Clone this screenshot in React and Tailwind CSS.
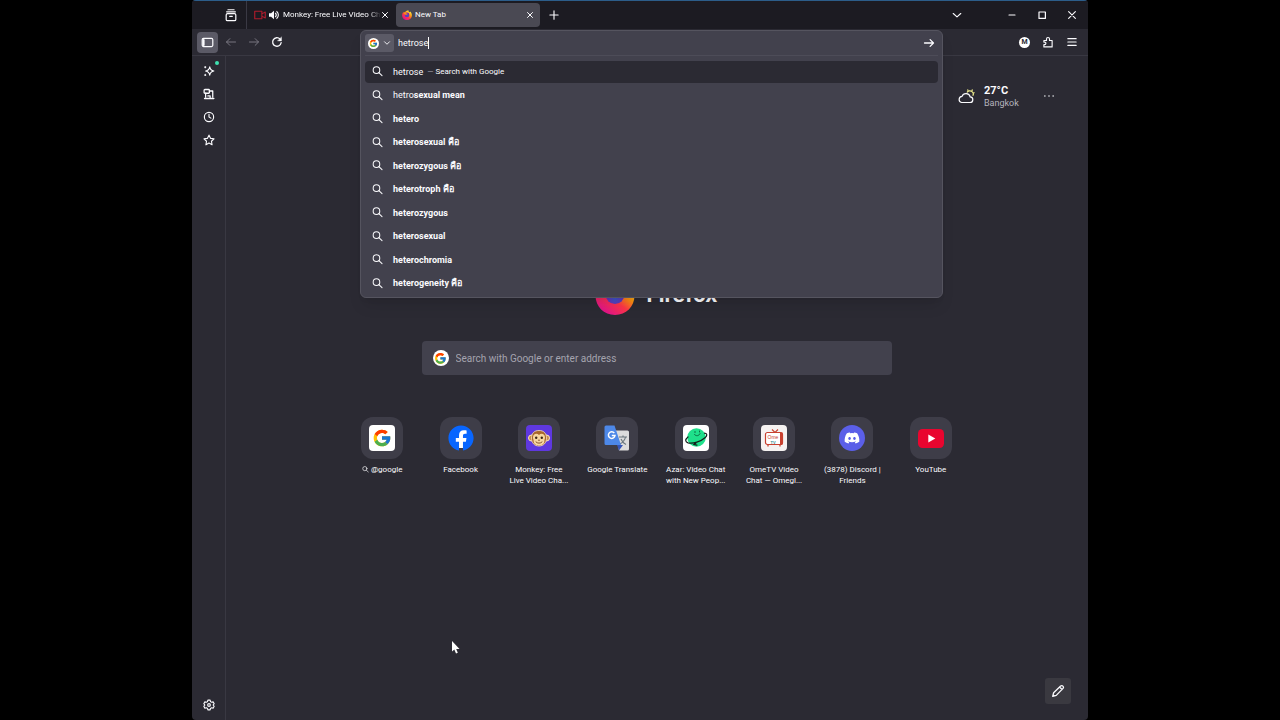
import { useState } from "react";
import { FcGoogle } from "react-icons/fc";
import { FaFacebook, FaDiscord } from "react-icons/fa";

const suggestions = [
  { typed: "hetro", rest: "sexual mean" },
  { typed: "", rest: "hetero" },
  { typed: "", rest: "heterosexual คือ" },
  { typed: "", rest: "heterozygous คือ" },
  { typed: "", rest: "heterotroph คือ" },
  { typed: "", rest: "heterozygous" },
  { typed: "", rest: "heterosexual" },
  { typed: "", rest: "heterochromia" },
  { typed: "", rest: "heterogeneity คือ" },
];

const Icon = ({ className = "size-3", width = 1.3, children }) => (
  <svg
    className={`shrink-0 ${className}`}
    viewBox="0 0 16 16"
    fill="none"
    stroke="currentColor"
    strokeWidth={width}
    strokeLinecap="round"
    strokeLinejoin="round"
    aria-hidden="true"
  >
    {children}
  </svg>
);

const SearchIcon = ({ className }) => (
  <Icon className={className} width={1.5}>
    <circle cx="6.5" cy="6" r="4.8" />
    <path d="M10 9.500l4.600 4.600" />
  </Icon>
);

const CloseIcon = ({ className = "size-2" }) => (
  <Icon className={className} width={2}>
    <path d="M3 3l10 10M13 3L3 13" />
  </Icon>
);

const GoogleBadge = ({ className }) => (
  <span className={`flex shrink-0 items-center justify-center rounded-full bg-white ${className}`}>
    <FcGoogle className="size-4/5" />
  </span>
);

const FirefoxLogo = ({ className, id }) => (
  <svg className={`shrink-0 ${className}`} viewBox="0 0 40 40" aria-hidden="true">
    <defs>
      <linearGradient id={`${id}-body`} x1="0.9" y1="0.1" x2="0.3" y2="0.95">
        <stop offset="0" stopColor="#fff44f" />
        <stop offset="0.4" stopColor="#ff980e" />
        <stop offset="0.65" stopColor="#ff3647" />
        <stop offset="1" stopColor="#e31587" />
      </linearGradient>
      <radialGradient id={`${id}-globe`} cx="0.5" cy="0.7" r="0.6">
        <stop offset="0" stopColor="#3a56c8" />
        <stop offset="1" stopColor="#7d23b5" />
      </radialGradient>
    </defs>
    <path
      d="M26 1c-1 4 1 6 4 8 2-1 3-2 3-3 4 4 6.500 9 6.500 14.500C39.500 31.500 31 40 20 40S.5 31.500.5 20.500C.5 15 3 9.500 6 6.500c0 2 .5 3.500 1.500 4.500C9 9 11.500 7.500 14 7c3-4 7-5.500 12-6z"
      fill={`url(#${id}-body)`}
    />
    <circle cx="20" cy="19.500" r="9.500" fill={`url(#${id}-globe)`} />
    <path d="M7 12c4-2 9-1 12 2 2 0 4 1 4 2-1 2-4 1.500-5 3-2 1-4 0-5 0-2 0-5-3-6-7z" fill="#ff8a16" />
  </svg>
);

const MonkeyIcon = () => (
  <svg className="size-[26px] rounded" viewBox="0 0 26 26" aria-hidden="true">
    <rect width="26" height="26" fill="#5f38e0" />
    <circle cx="5.500" cy="13" r="3" fill="#c98a4b" stroke="#f7e3bf" />
    <circle cx="20.500" cy="13" r="3" fill="#c98a4b" stroke="#f7e3bf" />
    <path d="M13 5.500c5 0 7.500 3 7.500 7.500 0 5-3 8-7.500 8s-7.500-3-7.500-8c0-4.500 2.500-7.500 7.500-7.500z" fill="#a7652c" stroke="#f7e3bf" strokeWidth="0.8" />
    <path d="M13 10c2-2 6-1.500 6 2.500 0 1.500-.6 2-.6 3.500 0 3-2.400 4.400-5.400 4.400S7.600 19 7.600 16C7.600 14.500 7 14 7 12.500c0-4 4-4.500 6-2.500z" fill="#f6d6a0" />
    <circle cx="10.200" cy="12.700" r="1.200" fill="#3a2213" />
    <circle cx="15.800" cy="12.700" r="1.200" fill="#3a2213" />
    <path d="M10 17c1.500 1.600 4.500 1.600 6 0M12.500 15.200h1" fill="none" stroke="#7b4420" strokeWidth="0.9" strokeLinecap="round" />
  </svg>
);

const TranslateIcon = () => (
  <svg className="size-[26px]" viewBox="0 0 26 26" aria-hidden="true">
    <path d="M11 5.500h12.500a1.500 1.500 0 011.500 1.500v17a1.500 1.500 0 01-1.500 1.500H15z" fill="#dcdcdc" />
    <path d="M15 12h8M19 10.500V12M21.500 12c-.5 3-3 5.500-5.500 7M17 14c1 2.500 3 4.500 5 5.500" fill="none" stroke="#69757c" strokeWidth="1.100" />
    <path d="M13 20h6l-4 5.500z" fill="#3555b8" />
    <path d="M2 .5h8.500L17 20H2A1.500 1.500 0 01.5 18.500V2A1.500 1.500 0 012 .5z" fill="#4d88e8" />
    <path d="M10.300 8A3.300 3.300 0 1011 10.500H7.800" fill="none" stroke="#fff" strokeWidth="1.500" />
  </svg>
);

const AzarIcon = () => (
  <svg className="size-[26px] rounded" viewBox="0 0 26 26" aria-hidden="true">
    <rect width="26" height="26" fill="#fff" />
    <circle cx="13.500" cy="12.500" r="9.300" fill="#1fe08b" />
    <path d="M5 12c-3 2.500-3 5 0 5.800 5 1.200 13-1.300 17-5 2.500-2.300 2.500-4.300-.5-4.600M13 18l-2 1.500 3 .7" fill="none" stroke="#12201b" strokeWidth="1.200" strokeLinecap="round" />
    <path d="M11.500 9.500c1.500 2 4.500 1.500 5.500-.8M12 6.500v1M16.500 6v1" fill="none" stroke="#0d6b43" strokeWidth="1" strokeLinecap="round" />
  </svg>
);

const OmeTvIcon = () => (
  <svg className="size-[26px] rounded" viewBox="0 0 26 26" aria-hidden="true">
    <rect width="26" height="26" fill="#f5f2f1" />
    <path d="M11 4.500l3 3L17 4.500" fill="none" stroke="#c8402f" strokeWidth="1.100" />
    <rect x="4.500" y="7.500" width="17" height="12" rx="2" fill="#fff" stroke="#c8402f" strokeWidth="1.200" />
    <path d="M19 7.500h2.500v12H19z" fill="#c8402f" />
    <path d="M7 20v1.500M19 20v1.500" stroke="#c8402f" strokeWidth="1.300" />
    <text x="6.500" y="13.800" fontSize="5" fontFamily="Liberation Sans, sans-serif" fill="#c8402f">Ome</text>
    <text x="9.500" y="18.500" fontSize="4" fontWeight="700" fontFamily="Liberation Sans, sans-serif" fill="#338b8f">TV</text>
  </svg>
);

const YouTubeIcon = () => (
  <svg className="h-[19px] w-[26px]" viewBox="0 0 26 19" aria-hidden="true">
    <rect width="26" height="19" rx="4.500" fill="#e9052f" />
    <path d="M10.300 5.500v8l7-4z" fill="#fff" />
  </svg>
);

const shortcuts = [
  {
    label: "@google",
    search: true,
    icon: (
      <span className="flex size-[26px] items-center justify-center rounded bg-white">
        <FcGoogle className="size-5" />
      </span>
    ),
  },
  {
    label: "Facebook",
    icon: (
      <span className="flex size-[26px] items-center justify-center rounded-full bg-[radial-gradient(#fff_55%,transparent_56%)]">
        <FaFacebook className="size-[26px] text-[#0866ff]" />
      </span>
    ),
  },
  { label: "Monkey: Free Live Video Cha...", icon: <MonkeyIcon /> },
  { label: "Google Translate", icon: <TranslateIcon /> },
  { label: "Azar: Video Chat with New Peop...", icon: <AzarIcon /> },
  { label: "OmeTV Video Chat — Omegl...", icon: <OmeTvIcon /> },
  {
    label: "(3878) Discord | Friends",
    icon: (
      <span className="flex size-[26px] items-center justify-center rounded-full bg-[#5b5fe8]">
        <FaDiscord className="size-4 text-white" />
      </span>
    ),
  },
  { label: "YouTube", icon: <YouTubeIcon /> },
];

function TabStrip() {
  return (
    <header className="flex h-[29px] items-center border-t border-[#2c5d8a] bg-[#1c1b22]">
      <button aria-label="Recent browsing" className="ml-8 mr-2 flex w-[14px] justify-center">
        <Icon className="size-[14px]" width={1.4}>
          <path d="M4.500 2h7" />
          <rect x="2.500" y="6.500" width="11" height="8" rx="1.500" />
          <path d="M3 4.300h10M6.500 9.500h3" />
        </Icon>
      </button>
      <div className="flex h-full w-[150px] items-center border-l border-[#3a3944] pl-[7px]">
        <Icon className="size-3 text-[#b01c2c]" width={1.500}>
          <path d="M1 3h9.500v10H1zM10.500 6.500L15 4v8l-4.500-2.500" />
        </Icon>
        <svg className="ml-[3px] size-[10px] shrink-0" viewBox="0 0 12 12" aria-hidden="true">
          <path d="M0 4h2.500L6 1v10L2.500 8H0z" fill="currentColor" />
          <path d="M7.500 3.500c1.500 1.500 1.500 3.500 0 5M9 1.500c3 2.500 3 6.500 0 9" fill="none" stroke="currentColor" strokeWidth="1.300" />
        </svg>
        <span className="ml-1 whitespace-nowrap text-[8px] [mask-image:linear-gradient(to_right,black_88%,transparent)]">
          Monkey: Free Live Video Ch
        </span>
        <button aria-label="Close Monkey tab" className="ml-auto mr-[9px]">
          <CloseIcon />
        </button>
      </div>
      <div className="flex h-6 w-36 items-center rounded bg-[#4a4953] px-[6px]">
        <FirefoxLogo className="size-[10px]" id="tab" />
        <span className="ml-[3px] flex-1 text-[8px]">New Tab</span>
        <button aria-label="Close New Tab">
          <CloseIcon />
        </button>
      </div>
      <button aria-label="Open a new tab" className="ml-2">
        <Icon width={1.500}>
          <path d="M8 2.500v11M2.500 8h11" />
        </Icon>
      </button>
      <div className="ml-auto flex items-center">
        <button aria-label="List all tabs" className="mr-[43px]">
          <Icon width={1.500}>
            <path d="M3 6l5 4.500L13 6" />
          </Icon>
        </button>
        <div className="mr-[10px] flex gap-[18px]">
          <button aria-label="Minimize">
            <Icon width={1.500}>
              <path d="M4 8h8" />
            </Icon>
          </button>
          <button aria-label="Maximize">
            <Icon width={1.600}>
              <rect x="4" y="4" width="8.500" height="8.500" />
            </Icon>
          </button>
          <button aria-label="Close window">
            <Icon width={1.500}>
              <path d="M3.500 3.500l9 9M12.500 3.500l-9 9" />
            </Icon>
          </button>
        </div>
      </div>
    </header>
  );
}

function UrlBar() {
  const [query, setQuery] = useState("hetrose");

  return (
    <div className="relative h-full flex-1">
      <div className="absolute inset-x-0 top-px z-10 h-[268px] rounded-md border border-[#55545f] bg-[#42414d] shadow-lg">
        <div className="mx-1 flex h-[25px] items-center border-b border-[#4d4c58]">
          <button aria-label="Search engine" className="flex h-[18px] w-[29px] items-center gap-1 rounded-[3px] bg-[#5b5a66] pl-[3px]">
            <GoogleBadge className="size-[11px]" />
            <Icon className="size-2" width={1.800}>
              <path d="M3 5.500l5 5 5-5" />
            </Icon>
          </button>
          <input
            aria-label="Address"
            value={query}
            onChange={(e) => setQuery(e.target.value)}
            className="field-sizing-content ml-1 bg-transparent pt-px text-[9px] caret-transparent outline-none"
          />
          <span className="h-3 w-px bg-white" />
          <button aria-label="Go" className="ml-auto mr-[3px]">
            <Icon width={1.700}>
              <path d="M2 8h12M9.500 3.500L14 8l-4.500 4.500" />
            </Icon>
          </button>
        </div>
        <ul className="mx-1 mt-1 grid h-[235px] auto-rows-fr">
          <li className="py-px">
            <button className="flex h-full w-full items-center rounded bg-[#2b2a33] pl-[7px] text-left text-[9px]">
              <SearchIcon className="size-[11px]" />
              <span className="ml-[10px] pt-px">{query}</span>
              <span className="ml-1 pt-px text-[8px]">
                <span className="text-[#a9a8b3]">—</span> Search with Google
              </span>
            </button>
          </li>
          {suggestions.map((s) => (
            <li key={s.typed + s.rest} className="py-px">
              <button className="flex h-full w-full items-center rounded pl-[7px] text-left text-[9px]">
                <SearchIcon className="size-[11px]" />
                <span className="ml-[10px] pt-px">
                  {s.typed}
                  <b>{s.rest}</b>
                </span>
              </button>
            </li>
          ))}
        </ul>
      </div>
    </div>
  );
}

function Toolbar() {
  return (
    <nav className="flex h-[27px] items-center border-b border-[#393842]">
      <div className="flex w-[168px] items-center gap-[11px] pl-[5px]">
        <button aria-label="Show sidebars" className="flex size-[21px] items-center justify-center rounded bg-[#5b5a66]">
          <Icon className="size-[13px]" width={1.500}>
            <rect x="1.500" y="3" width="13" height="10" rx="1.500" />
            <path d="M3.200 5v6" strokeWidth="2.500" />
          </Icon>
        </button>
        <button aria-label="Back" className="-ml-1 text-[#797883]">
          <Icon className="size-3">
            <path d="M14 8H2M6.500 3.500L2 8l4.500 4.500" />
          </Icon>
        </button>
        <button aria-label="Forward" className="text-[#797883]">
          <Icon className="size-3">
            <path d="M2 8h12M9.500 3.500L14 8l-4.500 4.500" />
          </Icon>
        </button>
        <button aria-label="Reload">
          <Icon className="size-3" width={1.800}>
            <path d="M13.500 9A5.700 5.700 0 1112 4" />
            <path d="M14 1.500v5H9z" fill="currentColor" strokeWidth="0.500" />
          </Icon>
        </button>
      </div>
      <UrlBar />
      <div className="flex w-[145px] items-center justify-end gap-3 pr-[10px]">
        <button aria-label="Account" className="flex size-[11px] items-center justify-center rounded-full bg-white text-[7px] font-bold text-[#2b2a33]">
          M
        </button>
        <button aria-label="Extensions">
          <Icon width={1.500}>
            <path d="M3 6h3V4a2 2 0 014 0v2h3.500v8.500h-11v-3h1a1.700 1.700 0 000-3.400h-1V6z" />
          </Icon>
        </button>
        <button aria-label="Open menu">
          <Icon width={1.600}>
            <path d="M2.500 3.500h11M2.500 8h11M2.500 12.500h11" />
          </Icon>
        </button>
      </div>
    </nav>
  );
}

function Sidebar() {
  return (
    <aside className="flex w-[34px] flex-col items-center gap-[11px] border-r border-[#393842] pb-[9px] pt-[9px]">
      <button aria-label="AI chatbot" className="relative">
        <Icon width={1.500}>
          <path d="M9 2.500c.6 3.500 2 5 5.500 5.500-3.500.6-5 2-5.500 5.500C8.400 10 7 8.600 3.500 8 7 7.500 8.400 6 9 2.500z" />
          <path d="M3 2v1.500M2.200 2.800h1.500M3 12.500V14M2.200 13.300h1.500" />
        </Icon>
        <span className="absolute -right-1 -top-1 size-1 rounded-full bg-[#3fe1b0]" />
      </button>
      <button aria-label="Synced tabs">
        <Icon width={1.700}>
          <rect x="1.500" y="2" width="7" height="5" rx="1" />
          <path d="M8.500 4H13v8M3.500 7v5M2 14h12.500M6.500 10.500h3v3" />
        </Icon>
      </button>
      <button aria-label="History">
        <Icon width={1.500}>
          <circle cx="8" cy="8" r="6.200" />
          <path d="M8 4.500V8l2.500 1.500" />
        </Icon>
      </button>
      <button aria-label="Bookmarks">
        <Icon width={1.500}>
          <path d="M8 1.500l2 4.300 4.700.6-3.400 3.300.8 4.700L8 12.100l-4.100 2.300.8-4.700L1.300 6.400 6 5.800z" />
        </Icon>
      </button>
      <button aria-label="Customize sidebar" className="mt-auto">
        <Icon width={1.500}>
          <path d="M6.500 1.500h3l.5 2 1.500.9 2-.6 1.400 2.500L13.500 8l1.400 1.700-1.400 2.500-2-.6-1.500.9-.5 2h-3l-.5-2-1.500-.9-2 .6-1.400-2.500L2.500 8 1.100 6.300l1.400-2.500 2 .6L6 3.500z" />
          <circle cx="8" cy="8" r="1.800" />
        </Icon>
      </button>
    </aside>
  );
}

function NewTabPage() {
  return (
    <main className="relative flex-1 pr-px">
      <div className="flex h-[54px] items-center justify-end pr-8 pt-[26px]">
        <svg className="h-4 w-[18px]" viewBox="0 0 18 16" fill="none" strokeWidth="1.200" aria-hidden="true">
          <path d="M10 4.500a3.300 3.300 0 015.800 3.200" stroke="#f3f08f" />
          <path d="M15.500 1.500L14.800 3M17.500 4.500L16.500 5M10.500 1.500l.7 1.300" stroke="#f3f08f" />
          <path d="M4.500 14.500h8.300a2.800 2.800 0 00.4-5.600A4.300 4.300 0 005 8.400a3.100 3.100 0 00-.5 6.100z" stroke="#fbfbfe" />
        </svg>
        <div className="ml-[9px] w-[59px]">
          <p className="text-[11px] font-bold leading-[13px]">27°C</p>
          <p className="text-[9px] leading-3 text-[#b5b4bd]">Bangkok</p>
        </div>
        <button aria-label="Weather options">
          <Icon width={2}>
            <path d="M2.500 8h.01M8 8h.01M13.500 8h.01" />
          </Icon>
        </button>
      </div>

      <div className="mt-[165px] flex h-10 items-center justify-center gap-[11px]">
        <FirefoxLogo className="size-10" id="brand" />
        <h1 className="font-['Inter'] text-[21px] font-bold">Firefox</h1>
      </div>

      <label className="mx-auto mt-[26px] flex h-[34px] w-[470px] items-center rounded bg-[#42414d] pl-[11px]">
        <GoogleBadge className="size-4" />
        <input
          aria-label="Search"
          placeholder="Search with Google or enter address"
          className="ml-[7px] flex-1 bg-transparent text-[10px] outline-none placeholder:text-[#a5a4af]"
        />
      </label>

      <ul className="mx-auto mt-[42px] grid w-[627px] grid-cols-8">
        {shortcuts.map((s) => (
          <li key={s.label}>
            <a href="#" className="flex flex-col items-center gap-[5px]">
              <span className="flex size-[42px] items-center justify-center rounded-xl bg-[#3e3d48]">{s.icon}</span>
              <span className="w-[62px] text-center text-[8px] leading-[11px]">
                {s.search && <SearchIcon className="mr-[2px] inline size-[7px]" />}
                {s.label}
              </span>
            </a>
          </li>
        ))}
      </ul>

      <button
        aria-label="Customize this page"
        className="absolute bottom-4 right-[17px] flex size-[26px] items-center justify-center rounded-[3px] bg-[#3a3940]"
      >
        <Icon className="size-[14px]" width={1.500}>
          <path d="M2 14l1-4L11 2.300a1.600 1.600 0 012.400 0l.4.400a1.600 1.600 0 010 2.300L6 13zM9.800 3.500l2.800 2.800" />
        </Icon>
      </button>

      <svg className="absolute bottom-[66px] left-[226px] h-[13px] w-2" viewBox="0 0 8 13" aria-hidden="true">
        <path d="M0 0v10.500l2.300-2 1.700 4 1.800-.8L4.200 8H7.500z" fill="#fff" />
      </svg>
    </main>
  );
}

export default function App() {
  return (
    <div className="h-screen bg-black">
      <div className="mx-auto flex h-full w-[70%] flex-col overflow-hidden rounded bg-[#2b2a33] font-['Roboto','Noto_Sans',sans-serif] text-[#fbfbfe]">
        <TabStrip />
        <Toolbar />
        <div className="flex flex-1">
          <Sidebar />
          <NewTabPage />
        </div>
      </div>
    </div>
  );
}
